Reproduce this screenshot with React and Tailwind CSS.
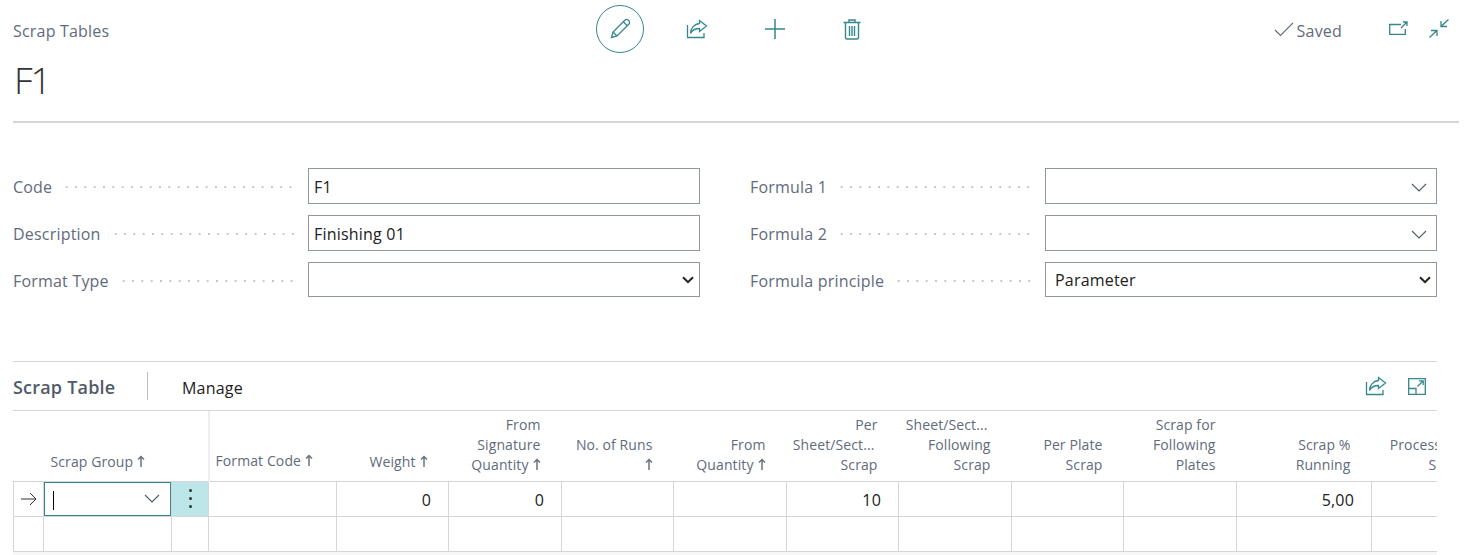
import React from "react";

const teal = "#35878b";

const PencilIcon = () => (
    <svg width="24" height="24" viewBox="0 0 24 24" fill="none" stroke={teal} strokeWidth="1.3">
        <path d="M3.5 20.5 L5 15 L16.8 3.2 C17.8 2.2 19.2 2.2 20.2 3.2 L20.8 3.8 C21.8 4.8 21.8 6.2 20.8 7.2 L9 19 Z" />
        <path d="M5 15 L9 19 M15.3 4.7 L19.3 8.7" />
    </svg>
);

const ShareIcon = ({ size = 22 }) => (
    <svg width={size} height={size} viewBox="0 0 22 22" fill="none" stroke={teal} strokeWidth="1.3">
        <path d="M1.5 7 V19.5 H18 V15" />
        <path d="M13.5 2.5 L20.5 8 L13.5 13.5 V10.5 C9.5 10.5 6.5 11.5 4.5 15.5 C4.5 10.5 8 6 13.5 5.5 Z" />
    </svg>
);

const PlusIcon = () => (
    <svg width="22" height="22" viewBox="0 0 22 22" fill="none" stroke={teal} strokeWidth="1.5">
        <path d="M11 1 V21 M1 11 H21" />
    </svg>
);

const TrashIcon = () => (
    <svg width="18" height="21" viewBox="0 0 18 21" fill="none" stroke={teal} strokeWidth="1.4">
        <path d="M0.5 3.5 H17.5 M6 3.5 V1 H12 V3.5 M2.5 3.5 V18.5 C2.5 19.5 3 20 4 20 H14 C15 20 15.5 19.5 15.5 18.5 V3.5" />
        <path d="M6.5 7 V17 M9 7 V17 M11.5 7 V17" />
    </svg>
);

const OpenIcon = () => (
    <svg width="19" height="14" viewBox="0 0 19 14" fill="none" stroke={teal} strokeWidth="1.3">
        <path d="M12 3.5 H0.7 V13.3 H16.3 V8" />
        <path d="M12 7 L17.5 1.5 M14 1 H18 V5" />
    </svg>
);

const CollapseIcon = () => (
    <svg width="20" height="19" viewBox="0 0 20 19" fill="none" stroke={teal} strokeWidth="1.3">
        <path d="M12 7.5 L19.5 0.5 M12 2 V7.5 H18" />
        <path d="M8 11.5 L0.5 18.5 M2 11.5 H8 V17" />
    </svg>
);

const ExpandIcon = () => (
    <svg width="18" height="17" viewBox="0 0 18 17" fill="none" stroke={teal} strokeWidth="1.3">
        <path d="M0.7 0.7 H17.3 V16.3 H0.7 Z M0.7 10.5 H8 V16.3" />
        <path d="M9.5 8.5 L15 3 M11 2.8 H15.2 V7" />
    </svg>
);

const CheckIcon = () => (
    <svg width="20" height="15" viewBox="0 0 20 15" fill="none" stroke="#5f6b7a" strokeWidth="1.2">
        <path d="M1 8 L6.5 13.5 L19 0.8" />
    </svg>
);

const Chevron = () => (
    <svg width="16" height="9" viewBox="0 0 16 9" fill="none" stroke="#505a68" strokeWidth="1.1">
        <path d="M1 1 L8 8 L15 1" />
    </svg>
);

const SelectChevron = () => (
    <svg width="12" height="8" viewBox="0 0 12 8" fill="none" stroke="#212121" strokeWidth="2">
        <path d="M1 1.2 L6 6.2 L11 1.2" />
    </svg>
);

const SortArrow = () => (
    <svg className="inline-block ml-[4px] mb-[3px]" width="8" height="12" viewBox="0 0 8 12" fill="none" stroke="#6b7280" strokeWidth="1.5">
        <path d="M4 12 V1.5 M1 4.5 L4 1.5 L7 4.5" />
    </svg>
);

const Field = ({ label, children }) => (
    <div className="flex items-center h-[36px]">
        <span className="w-[295px] pt-[2px] flex items-center shrink-0 text-[#616b7c]">
            <span>{label}</span>
            <span className="flex-1 ml-[10px] mr-[12px] h-[2px] bg-[radial-gradient(circle,#c2c5cb_1px,transparent_1px)] bg-[length:9.33px_2px]" />
        </span>
        {children}
    </div>
);

const TextBox = ({ value }) => (
    <input
        readOnly
        value={value}
        className="w-[392px] h-full border border-[#8e96a3] px-[5px] pt-[1px] text-[#212121] outline-none"
    />
);

const ComboBox = () => (
    <div className="relative w-[392px] h-full">
        <input readOnly value="" className="w-full h-full border border-[#8e96a3] outline-none" />
        <span className="absolute right-[10px] top-[15px] flex">
            <Chevron />
        </span>
    </div>
);

const SelectBox = ({ value, options }) => (
    <div className="relative w-[392px] h-[35px] self-start">
        <select
            value={value}
            onChange={() => {}}
            className="appearance-none w-full h-full border border-[#8e96a3] px-[9px] pt-[1px] text-[#212121] bg-white outline-none"
        >
            {options.map((o) => (
                <option key={o} value={o}>{o}</option>
            ))}
        </select>
        <span className="absolute right-[6px] top-[14px] flex">
            <SelectChevron />
        </span>
    </div>
);

// widths of the grid columns, last one runs past the clip edge
const columns = [
    { w: 128, label: null },
    { w: 112, label: ["Weight"], arrow: true, value: "0", pad: "pb-[9px]" },
    { w: 113, label: ["From", "Signature", "Quantity"], arrow: true, value: "0" },
    { w: 112, label: ["No. of Runs", ""], arrow: true },
    { w: 113, label: ["From", "Quantity"], arrow: true },
    { w: 112, label: ["Per", "Sheet/Sect...", "Scrap"], value: "10" },
    { w: 113, label: ["Sheet/Sect...", "Following", "Scrap"] },
    { w: 112, label: ["Per Plate", "Scrap"] },
    { w: 113, label: ["Scrap for", "Following", "Plates"] },
    { w: 135, label: ["Scrap %", "Running"], value: "5,00" },
    { w: 115, label: ["Process Set", "Scrap"] },
];

const HeaderCell = ({ col }) => (
    <th className={`p-0 pr-[21px] ${col.pad || "pb-[6px]"} align-bottom text-right font-normal text-[14px] tracking-[0.1px] text-[#616b7c] leading-[20px] whitespace-nowrap`}>
        {col.label.map((line, i) => (
            <div key={i} className={line.endsWith("...") ? "pr-[3px]" : ""}>
                {line}
                {col.arrow && i === col.label.length - 1 && <SortArrow />}
            </div>
        ))}
    </th>
);

const cell = "p-0 border border-[#d5d6da]";

export default function App() {
    return (
        <div className="w-[1479px] h-[555px] overflow-hidden bg-white pl-[13px] pr-[20px] text-[16px] font-['Open_Sans',sans-serif] tracking-[0.2px]">
            {/* page header */}
            <div className="h-[123px] border-b-2 border-[#d5d6da] flex">
                <div className="w-[560px] shrink-0">
                    <div className="mt-[20px] text-[#616b7c] leading-[22px]">Scrap Tables</div>
                    <div className="mt-[16px] ml-[1px] text-[37px] leading-[44px] font-light tracking-[-2px] text-[#333]">F1</div>
                </div>
                <div className="flex items-start pt-[5px]">
                    <div className="ml-[23px] w-[48px] h-[48px] rounded-full border border-[#35878b] flex items-center justify-center">
                        <PencilIcon />
                    </div>
                    <div className="ml-[42px] mt-[13px] flex"><ShareIcon /></div>
                    <div className="ml-[56px] mt-[13px] flex"><PlusIcon /></div>
                    <div className="ml-[57px] mt-[14px] flex"><TrashIcon /></div>
                </div>
                <div className="flex-1 flex items-start justify-end pt-[20px] pr-[10px]">
                    <span className="mt-[2px] mr-[3px] flex"><CheckIcon /></span>
                    <span className="text-[#616b7c] leading-[22px]">Saved</span>
                    <span className="ml-[47px] mt-[1px] flex"><OpenIcon /></span>
                    <span className="ml-[21px] mt-[-1px] flex"><CollapseIcon /></span>
                </div>
            </div>

            {/* general fields */}
            <div className="mt-[45px] w-[1424px] flex justify-between">
                <div className="flex flex-col gap-[11px]">
                    <Field label="Code"><TextBox value="F1" /></Field>
                    <Field label="Description"><TextBox value="Finishing 01" /></Field>
                    <Field label="Format Type"><SelectBox value="" options={[""]} /></Field>
                </div>
                <div className="flex flex-col gap-[11px]">
                    <Field label="Formula 1"><ComboBox /></Field>
                    <Field label="Formula 2"><ComboBox /></Field>
                    <Field label="Formula principle"><SelectBox value="Parameter" options={["Parameter"]} /></Field>
                </div>
            </div>

            {/* scrap table part */}
            <div className="mt-[63px] w-[1424px] border-t border-[#d5d6da] bg-[#f7f7f8]">
                <div className="h-[49px] flex items-center border-b border-[#d5d6da] bg-white">
                    <span className="pt-[2px] text-[18px] font-semibold text-[#505a68] w-[134px]">Scrap Table</span>
                    <span className="w-px h-[28px] bg-[#b9bdc4]" />
                    <span className="ml-[34px] pt-[3px] text-[#212121]">Manage</span>
                    <span className="ml-auto flex"><ShareIcon /></span>
                    <span className="ml-[21px] mr-[11px] flex"><ExpandIcon /></span>
                </div>
                <div className="overflow-hidden h-[150px]">
                    <table className="border-collapse table-fixed w-[1473px] bg-white">
                        <colgroup>
                            <col className="w-[30px]" />
                            <col className="w-[128px]" />
                            <col className="w-[37px]" />
                            {columns.map((c, i) => (
                                <col key={i} style={{ width: c.w }} />
                            ))}
                        </colgroup>
                        <thead>
                            <tr className="h-[70px]">
                                <th colSpan={3} className="p-0 pl-[37px] pb-[9px] align-bottom text-left font-normal text-[14px] tracking-[0.1px] text-[#616b7c] leading-[20px] whitespace-nowrap">
                                    Scrap Group<SortArrow />
                                </th>
                                <th className="p-0 pl-[6px] pb-[10px] align-bottom text-left font-normal text-[14px] tracking-[0.1px] text-[#616b7c] leading-[20px] whitespace-nowrap border-l-2 border-[#eeeef0]">
                                    Format Code<SortArrow />
                                </th>
                                {columns.slice(1).map((c, i) => (
                                    <HeaderCell key={i} col={c} />
                                ))}
                            </tr>
                        </thead>
                        <tbody className="text-[#212121]">
                            <tr className="h-[35px]">
                                <td className={cell}>
                                    <svg className="mx-auto" width="16" height="14" viewBox="0 0 16 14" fill="none" stroke="#333" strokeWidth="1">
                                        <path d="M0 7 H15 M9 1 L15 7 L9 13" />
                                    </svg>
                                </td>
                                <td className={cell}>
                                    <div className="h-[34px] border border-[#35878b] flex items-center justify-between pl-[8px] pr-[10px]">
                                        <span className="w-px h-[19px] mt-[3px] bg-black" />
                                        <Chevron />
                                    </div>
                                </td>
                                <td className={`${cell} bg-[#bde6e8]`}>
                                    <div className="flex flex-col items-center gap-[5px]">
                                        <span className="w-[3px] h-[3px] rounded-full bg-[#333]" />
                                        <span className="w-[3px] h-[3px] rounded-full bg-[#333]" />
                                        <span className="w-[3px] h-[3px] rounded-full bg-[#333]" />
                                    </div>
                                </td>
                                {columns.map((c, i) => (
                                    <td key={i} className={`${cell} text-right pr-[17px] pt-[2px]`}>{c.value}</td>
                                ))}
                            </tr>
                            <tr className="h-[35px]">
                                <td className={cell} />
                                <td className={cell} />
                                <td className={cell} />
                                {columns.map((c, i) => (
                                    <td key={i} className={cell} />
                                ))}
                            </tr>
                        </tbody>
                    </table>
                </div>
            </div>
        </div>
    );
}
